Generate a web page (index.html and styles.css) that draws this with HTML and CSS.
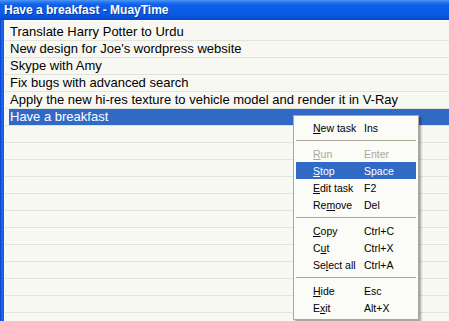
FILE: index.html
```html
<!DOCTYPE html>
<html>
<head>
<meta charset="utf-8">
<link rel="stylesheet" href="styles.css">
</head>
<body>
<div class="window">
  <div class="titlebar">Have a breakfast - MuayTime</div>
  <div class="client">
    <div class="frame-left"></div>
    <div class="list">
      <div class="row"><span class="label">Translate Harry Potter to Urdu</span></div>
      <div class="row"><span class="label">New design for Joe's wordpress website</span></div>
      <div class="row"><span class="label">Skype with Amy</span></div>
      <div class="row"><span class="label">Fix bugs with advanced search</span></div>
      <div class="row"><span class="label">Apply the new hi-res texture to vehicle model and render it in V-Ray</span></div>
      <div class="row selected"><span class="label">Have a breakfast</span></div>
      <div class="row"></div>
      <div class="row"></div>
      <div class="row"></div>
      <div class="row"></div>
      <div class="row"></div>
      <div class="row"></div>
      <div class="row"></div>
      <div class="row"></div>
      <div class="row"></div>
      <div class="row"></div>
      <div class="row"></div>
      <div class="row"></div>
    </div>
  </div>
</div>

<div class="menu">
  <div class="item"><span class="name"><u>N</u>ew task</span><span class="key">Ins</span></div>
  <div class="sep"></div>
  <div class="item disabled"><span class="name"><u>R</u>un</span><span class="key">Enter</span></div>
  <div class="item active"><span class="name"><u>S</u>top</span><span class="key">Space</span></div>
  <div class="item"><span class="name"><u>E</u>dit task</span><span class="key">F2</span></div>
  <div class="item"><span class="name">Re<u>m</u>ove</span><span class="key">Del</span></div>
  <div class="sep"></div>
  <div class="item"><span class="name"><u>C</u>opy</span><span class="key">Ctrl+C</span></div>
  <div class="item"><span class="name">C<u>u</u>t</span><span class="key">Ctrl+X</span></div>
  <div class="item"><span class="name">Se<u>l</u>ect all</span><span class="key">Ctrl+A</span></div>
  <div class="sep"></div>
  <div class="item"><span class="name"><u>H</u>ide</span><span class="key">Esc</span></div>
  <div class="item"><span class="name">E<u>x</u>it</span><span class="key">Alt+X</span></div>
</div>
</body>
</html>
```

FILE: styles.css
```css
html, body {
  margin: 0;
  padding: 0;
  width: 449px;
  height: 321px;
  overflow: hidden;
  background: #f8f8f3;
}

.window {
  display: flex;
  flex-direction: column;
  width: 449px;
  height: 321px;
}

.titlebar {
  flex: none;
  height: 20px;
  line-height: 20px;
  padding-left: 4px;
  font-family: "Liberation Sans", Arial, sans-serif;
  font-weight: bold;
  font-size: 12px;
  color: #fff;
  background: linear-gradient(to bottom, #4f98f6 0, #2a78ef 2px, #0d5ee8 5px, #0b5ae6 14px, #0852dc 17px, #0646c6 20px);
  text-shadow: 1px 1px 0 rgba(0, 20, 90, 0.5);
}

.client {
  flex: 1;
  display: flex;
  min-height: 0;
}

.frame-left {
  flex: none;
  width: 4px;
  background: linear-gradient(to right, #0a3fcf, #1f6cf0 50%, #0b55e0);
}

.list {
  flex: 1;
  border-top: 1px solid #ffffff;
  padding-top: 3px;
  padding-left: 1px;
  overflow: hidden;
  font-family: "Liberation Sans", Arial, sans-serif;
  font-size: 13px;
  color: #000;
}

.row {
  height: 16px;
  border-bottom: 1px solid #e3e3dc;
  padding-left: 4px;
  display: flex;
}

.label {
  flex: 1;
  padding-left: 1px;
  line-height: 16px;
  white-space: nowrap;
}

.row.selected .label {
  background: #316ac5;
  color: #fff;
}

.menu {
  position: absolute;
  left: 293px;
  top: 115px;
  width: 120px;
  padding: 3px 2px;
  background: #fbfbf8;
  border: 1px solid #aca899;
  box-shadow: 2px 2px 2px rgba(0, 0, 0, 0.35);
  font-family: "Liberation Sans", Arial, sans-serif;
  font-size: 10.5px;
  color: #000;
}

.item {
  display: flex;
  align-items: center;
  height: 17px;
  padding-left: 17px;
  white-space: nowrap;
}

.item .name {
  width: 51px;
}

.item.disabled {
  color: #aca899;
}

.item.active {
  background: #316ac5;
  color: #fff;
}

.sep {
  height: 1px;
  margin: 4px 0;
  background: #aca899;
}
```
